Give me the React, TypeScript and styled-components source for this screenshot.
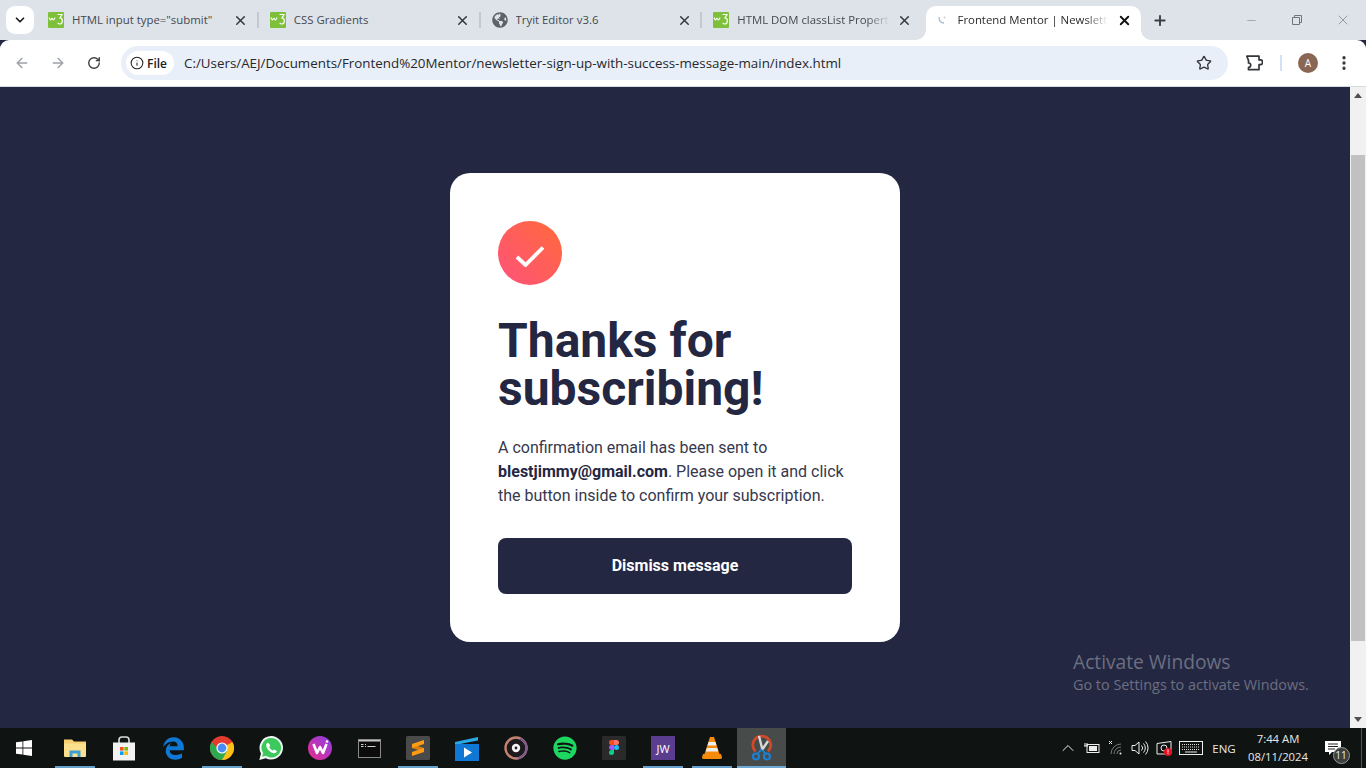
import React from "react";
import styled, { createGlobalStyle } from "styled-components";
import { FaGlobeAmericas, FaEdgeLegacy, FaSpotify } from "react-icons/fa";
import { ArrowLeft, ArrowRight, RotateCw, Info, Star, EllipsisVertical, ChevronDown, X, Plus, Minus, ChevronUp } from "lucide-react";

const Global = createGlobalStyle`
  html, body { margin: 0; padding: 0; height: 768px; overflow: hidden; background: #232742; }
  #root { height: 768px; }
  * { box-sizing: border-box; }
`;
const UI = `"Open Sans", "Noto Sans", "Liberation Sans", sans-serif`;

const Screen = styled.div`
  width: 1366px; height: 768px; display: flex; flex-direction: column; position: relative; overflow: hidden;
  font-family: ${UI};
`;
const TabStrip = styled.div`
  height: 40px; background: #dee3ea; display: flex; padding: 6px 0 0 6px; flex: none; position: relative; z-index: 1;
`;
const DropBtn = styled.div`
  width: 28px; height: 28px; background: #fff; border-radius: 9px; display: flex; align-items: center; justify-content: center;
  margin-right: 2px; color: #1f1f1f; flex: none;
`;
const Tab = styled.div<{ $sep?: boolean }>`
  width: 221.75px; height: 34px; display: flex; align-items: center; flex: none; position: relative;
  padding: 0 ${p => (p.$sep ? 11 : 13)}px 6px 12px; gap: 8px;
  ${p => p.$sep ? `&::after { content: ""; position: absolute; right: -1px; top: 6px; width: 2px; height: 16px; background: #c4c8cf; }` : ""}
`;
const ActiveTab = styled.div`
  width: 215px; height: 34px; display: flex; align-items: center; flex: none; position: relative;
  padding: 0 10px 6px 11px; gap: 11px; margin-left: 2.5px; background: #fff; border-radius: 10px 10px 0 0;
  &::before, &::after { content: ""; position: absolute; bottom: 0; width: 10px; height: 10px; }
  &::before { left: -10px; background: radial-gradient(circle at 0 0, transparent 9.5px, #fff 10px); }
  &::after { right: -10px; background: radial-gradient(circle at 100% 0, transparent 9.5px, #fff 10px); }
`;
const TabTitle = styled.span<{ $active?: boolean; $fade?: boolean }>`
  flex: 1; min-width: 0; font-size: 11.4px; line-height: 16px; white-space: nowrap; overflow: hidden;
  color: ${p => (p.$active ? "#2b2b2b" : "#45494e")};
  ${p => p.$fade ? "-webkit-mask-image: linear-gradient(to right, #000 85%, transparent 100%); mask-image: linear-gradient(to right, #000 85%, transparent 100%);" : ""}
`;
const TabClose = styled.span`
  width: 12px; height: 12px; display: flex; align-items: center; justify-content: center; flex: none; color: #33373b;
  svg { flex: none; }
`;
const NewTab = styled.div`
  width: 16px; margin: 6px 0 0 11px; color: #3a3d41; height: 16px; flex: none; display: flex; align-items: center; justify-content: center;
`;
const WinButtons = styled.div`
  margin-left: auto; display: flex; height: 28px; color: #70757a; flex: none; width: 138px;
`;
const WinBtn = styled.div`
  width: 46px; height: 28px; display: flex; align-items: center; justify-content: center;
`;
const Toolbar = styled.div`
  height: 46px; background: #fff; display: flex; align-items: center; flex: none; border-radius: 9px 9px 0 0;
  margin-bottom: 1px; position: relative; box-shadow: 0 1px 0 #d6d9dd;
`;
const NavBtn = styled.div<{ $w: number; $c: string }>`
  width: ${p => p.$w}px; height: 32px; display: flex; align-items: center; justify-content: center; color: ${p => p.$c}; flex: none;
`;
const NavGroup = styled.div`
  display: flex; padding-left: 4px; width: 121px; flex: none;
`;
const Omnibox = styled.div`
  width: 1107px; height: 34px; background: #e9eff8; border-radius: 17px; display: flex; align-items: center; padding: 0 16px 0 5px; flex: none;
`;
const Chip = styled.div`
  width: 48px; height: 24px; border-radius: 12px; background: #fff; display: flex; align-items: center; padding-left: 4px; gap: 3px; flex: none; color: #202124;
  font-size: 12px; font-weight: 600;
`;
const Url = styled.span`
  margin-left: 10px; font-size: 13.36px; color: #26282b; white-space: nowrap; flex: 1;
`;
const ToolRight = styled.div`
  display: flex; align-items: center; flex: none; padding-left: 14px;
`;
const ToolDivider = styled.div`
  width: 2px; height: 16px; background: #d3e2f6; margin: 0 16px 0 17px;
`;
const Avatar = styled.div`
  width: 20px; height: 20px; border-radius: 50%; background: #8a6655; color: #fff; font-size: 10px; display: flex; align-items: center; justify-content: center; flex: none;
`;
const Body = styled.div`
  flex: 1; min-height: 0; display: flex;
`;
const Page = styled.main`
  flex: 1; background: #232742; display: flex; align-items: center; justify-content: center; font-family: Roboto, sans-serif;
`;
const Card = styled.section`
  width: 450px; height: 469px; background: #fff; border-radius: 20px; padding: 48px;
  display: flex; flex-direction: column;
`;
const Check = styled.div`
  width: 64px; height: 64px; border-radius: 50%; background: linear-gradient(225deg, #ff6a3a 0%, #ff527b 100%);
  display: flex; align-items: center; justify-content: center; flex: none;
`;
const Title = styled.h1`
  margin: 32px 0 0; font-size: 48px; line-height: 48px; font-weight: 700; color: #242742;
`;
const Message = styled.p`
  margin: 23px 0 0; font-size: 16px; line-height: 24px; color: #36384d;
  b { font-weight: 700; color: #242742; }
`;
const Dismiss = styled.button`
  margin-top: 30px; height: 56px; background: #242742; color: #fff; border: 0; border-radius: 8px; padding: 0 0 2px;
  font: 700 16px Roboto, sans-serif; flex: none;
`;
const Scrollbar = styled.div`
  width: 16px; background: #f1f1f1; display: flex; flex-direction: column; align-items: center; flex: none;
`;
const ArrowBtn = styled.div`
  height: 17px; width: 16px; display: flex; align-items: center; justify-content: center; flex: none;
`;
const Track = styled.div`
  flex: 1; width: 100%; padding: 51px 1px 70px;
`;
const Thumb = styled.div`
  height: 100%; background: #c1c1c1;
`;
const Watermark = styled.div`
  position: absolute; left: 1073px; top: 649px; color: rgba(255,255,255,.34); pointer-events: none;
`;
const WmTitle = styled.div`
  font-size: 19.2px; line-height: 25px;
`;
const WmSub = styled.div`
  font-size: 14.4px; line-height: 21px;
`;
const Taskbar = styled.footer`
  height: 40px; background: #0f1413; display: flex; flex: none; color: #fff;
`;
const Start = styled.div`
  width: 50.5px; display: flex; align-items: center; justify-content: center; padding-right: 2.5px; flex: none;
`;
const TaskItem = styled.div<{ $run?: boolean; $active?: boolean }>`
  width: 49px; height: 40px; display: flex; align-items: center; justify-content: center; position: relative; flex: none;
  background: ${p => (p.$active ? "#474b49" : "transparent")};
  &::after {
    content: ""; position: absolute; bottom: 0; height: 2px; background: #76b9ed;
    left: ${p => (p.$active ? "0" : "4.5px")}; right: ${p => (p.$active ? "0" : "4.5px")};
    display: ${p => (p.$run || p.$active ? "block" : "none")};
    opacity: .85;
  }
`;
const JW = styled.div`
  width: 24px; height: 24px; background: #5b3d8f; color: #fff; font-size: 11px; display: flex; align-items: center; justify-content: center;
`;
const Tray = styled.div`
  margin-left: auto; display: flex; align-items: center; color: #eee; flex: none; padding-right: 4px; height: 40px;
`;
const TrayIcon = styled.div<{ $w: number }>`
  width: ${p => p.$w}px; display: flex; align-items: center; justify-content: center; flex: none;
`;
const Lang = styled.span`
  width: 36px; font-size: 11.5px; text-align: center; color: #e8e8e8; flex: none;
`;
const Clock = styled.div`
  width: 72px; text-align: center; font-size: 11.3px; line-height: 18px; color: #e8e8e8; flex: none;
`;
const Notif = styled.div`
  width: 48px; height: 40px; position: relative; display: flex; align-items: center; justify-content: center; flex: none;
  border-right: 1px solid #555; padding-right: 9px;
`;
const Count = styled.span`
  position: absolute; left: 18.5px; top: 19px; width: 17px; height: 17px; border-radius: 50%; background: #3c3f3f; border: 1px solid #999;
  font-size: 10px; line-height: 15px; text-align: center; color: #eee;
`;

const W3 = () => (
  <svg width="16" height="16" viewBox="0 0 16 16" style={{ flex: "none" }}>
    <rect width="16" height="16" rx="1" fill="#7fc03a" />
    <path d="M1 5.5c.6 1.6 1 2.500 1.500 2.500s.9-1.800 1.400-1.800.9 1.800 1.400 1.800 1.100-1 1.800-2.500" stroke="#fff" strokeWidth="1.1" fill="none" />
    <path d="M9.500 2.500h4.500l-2 3.500c1.800 0 2.300 1.300 2.300 2.700 0 1.900-1.100 3.300-2.500 3.300-.9 0-1.600-.4-2.100-1.100" stroke="#fff" strokeWidth="1.200" fill="none" />
  </svg>
);
const ChromeIcon = () => (
  <svg width="24" height="24" viewBox="0 0 24 24">
    <circle cx="12" cy="12" r="12" fill="#e33b2e" />
    <path d="M12 24A12 12 0 0 0 22.4 6L12 12 7 21z" fill="#fbc116" />
    <path d="M1.6 6A12 12 0 0 0 12 24l5-9-5-3H7z" fill="#2da94f" />
    <circle cx="12" cy="12" r="5.6" fill="#fff" />
    <circle cx="12" cy="12" r="4.4" fill="#4a8bf5" />
  </svg>
);
const Explorer = () => (
  <svg width="22" height="20" viewBox="0 0 22 20">
    <path d="M0 1.5h8l2 2h12V18H0z" fill="#f9d06f" />
    <path d="M0 5.5h22V18a1 1 0 0 1-1 1H1a1 1 0 0 1-1-1z" fill="#fce08d" />
    <path d="M5.500 19v-6.500h11V19h-3v-3.500h-5V19z" fill="#3f9ed4" />
  </svg>
);
const StoreIcon = () => (
  <svg width="24" height="25" viewBox="0 0 24 25">
    <path d="M7 7V4a3 3 0 0 1 3-3h4a3 3 0 0 1 3 3v3" fill="none" stroke="#ddd" strokeWidth="1.6" />
    <rect x="1" y="6.5" width="22" height="18" fill="#f2f2f2" />
    <rect x="8" y="11" width="3.6" height="3.6" fill="#f25022" />
    <rect x="12.4" y="11" width="3.6" height="3.6" fill="#7fba00" />
    <rect x="8" y="15.4" width="3.6" height="3.6" fill="#00a4ef" />
    <rect x="12.4" y="15.4" width="3.6" height="3.6" fill="#ffb900" />
  </svg>
);
const WhatsApp = () => (
  <svg width="24" height="24" viewBox="0 0 24 24">
    <path d="M12.200 0A11.800 11.800 0 0 0 2 17.600L.3 24l6.500-1.700A11.800 11.800 0 1 0 12.200 0z" fill="#f2f7f3" />
    <path d="M12.200 2.100a9.700 9.700 0 0 0-8.100 15l-1 3.700 3.800-1a9.700 9.700 0 1 0 5.300-17.700z" fill="#3bc95c" />
    <path d="M8.700 6.700c-.5 0-1.500.9-1.500 2.500 0 3.400 4.300 8 8.100 8 1.500 0 2.500-1.200 2.500-2 0-.5-2.200-1.700-2.700-1.700-.4 0-.8 1-1.300 1-1 0-3.500-2.400-3.500-3.400 0-.5.900-.8.900-1.300 0-.4-1-3.100-2.500-3.100z" fill="#fff" />
  </svg>
);
const Wps = () => (
  <svg width="24" height="24" viewBox="0 0 24 24">
    <defs><linearGradient id="wps" x1="0" y1="1" x2="1" y2="0"><stop offset="0" stopColor="#ea2c8c" /><stop offset="1" stopColor="#8a3fe4" /></linearGradient></defs>
    <circle cx="12" cy="12" r="12" fill="url(#wps)" />
    <path d="M5.500 8l3.500 9 3-6 3 6 3.500-9" stroke="#fff" strokeWidth="2.6" fill="none" strokeLinejoin="round" />
    <circle cx="19" cy="5.5" r="1.3" fill="#fff" />
  </svg>
);
const Term = () => (
  <svg width="23" height="19" viewBox="0 0 23 19">
    <rect x=".5" y=".5" width="22" height="18" fill="#0c0c0c" stroke="#8a8a8a" />
    <rect x="1" y="1" width="21" height="1.5" fill="#c8c8c8" />
    <path d="M3 5.500h2.500M3 7.500h2.500M7 5.500h1M7 7.500h1M9.500 7.500h8" stroke="#ccc" strokeWidth="1" fill="none" />
  </svg>
);
const Sublime = () => (
  <svg width="24" height="24" viewBox="0 0 24 24">
    <rect width="24" height="24" rx="1.5" fill="#4a4a4a" />
    <path d="M6 8l12 4v4L6 12z" fill="#d97f0e" />
    <path d="M6 8l12-4v4L6 12zM6 16l12-4v4L6 20z" fill="#ff9c13" />
  </svg>
);
const Movies = () => (
  <svg width="24" height="25" viewBox="0 0 24 25">
    <path d="M0 6l23-5v3.500L0 9z" fill="#29a8e8" />
    <path d="M0 8h24v17H0z" fill="#0f78d4" />
    <path d="M9 11.500l8 5-8 5z" fill="#fff" />
  </svg>
);
const Groove = () => (
  <svg width="24" height="24" viewBox="0 0 24 24">
    <circle cx="12" cy="12" r="10.5" fill="#1c1a1c" stroke="#c48370" strokeWidth="2.4" />
    <path d="M16 2.300A10.500 10.500 0 0 1 14 22.300" fill="none" stroke="#7b5a90" strokeWidth="2.4" />
    <circle cx="12" cy="12" r="4.2" fill="#f4f4f4" />
    <circle cx="12" cy="12" r="1.4" fill="#222" />
  </svg>
);
const Figma = () => (
  <svg width="24" height="24" viewBox="0 0 24 24">
    <rect width="24" height="24" rx="1.5" fill="#2a2a2a" />
    <path d="M7 4h5v5H9.500A2.500 2.500 0 0 1 7 6.500 2.500 2.500 0 0 1 9.500 4z" fill="#f24e1e" />
    <path d="M12 4h2.500a2.500 2.500 0 0 1 0 5H12z" fill="#ff7262" />
    <path d="M12 9H9.500a2.500 2.500 0 0 0 0 5H12z" fill="#a259ff" />
    <circle cx="14.5" cy="11.5" r="2.5" fill="#1abcfe" />
    <path d="M9.500 14H12v2.500a2.500 2.500 0 1 1-2.500-2.500z" fill="#0acf83" />
  </svg>
);
const Vlc = () => (
  <svg width="20" height="24" viewBox="0 0 20 24">
    <path d="M8 1h4l5.500 17h-15z" fill="#f58a0b" />
    <path d="M6.500 6h7l1 3.500h-9zM4.800 12h10.400l1 3.400H3.800z" fill="#eee" />
    <path d="M1 18h18l1 3.500q0 1.500-2 1.500H2q-2 0-2-1.500z" fill="#f58a0b" />
  </svg>
);
const Snip = () => (
  <svg width="24" height="26" viewBox="0 0 24 26">
    <path d="M6.500 16.500A9 9 0 1 1 19 16.500" fill="none" stroke="#d2492a" strokeWidth="2.8" />
    <path d="M10 1l3.500 14M19 6l-6 9" stroke="#d8d8d8" strokeWidth="2.4" />
    <circle cx="7" cy="21.5" r="3" fill="none" stroke="#1d7fd1" strokeWidth="2.2" />
    <circle cx="18" cy="21.5" r="3" fill="none" stroke="#1d7fd1" strokeWidth="2.2" />
    <path d="M8.500 19l4-5M16.500 19l-3-4" stroke="#1d7fd1" strokeWidth="2" />
  </svg>
);
const Puzzle = () => (
  <svg width="18" height="18" viewBox="0 0 18 18" style={{ marginLeft: 3, flex: "none" }}>
    <path d="M1.800 2.500h12.200v3.700h1.200a2 2 0 0 1 0 4.800H14v5H3.500v-2.300A2.200 2.200 0 0 0 3.500 9.300V6.700z" transform="translate(0 -.3)" fill="none" stroke="#33373b" strokeWidth="1.7" strokeLinejoin="round" />
  </svg>
);
const KeyboardIcon = () => (
  <svg width="24" height="14" viewBox="0 0 24 14">
    <rect x=".5" y=".5" width="23" height="13" fill="none" stroke="#eee" />
    <path d="M3 3.500h18M3 6h18M3 8.500h18" stroke="#ddd" strokeDasharray="1 1" />
    <path d="M6 11h12" stroke="#eee" />
  </svg>
);
const VolumeIcon = () => (
  <svg width="18" height="16" viewBox="0 0 18 16">
    <path d="M1 5.500h3L8 2v12l-4-3.500H1z" fill="none" stroke="#eee" />
    <path d="M10.500 5.500a3.500 3.500 0 0 1 0 5M12.500 3.500a6.500 6.500 0 0 1 0 9M14.500 1.500a9.500 9.500 0 0 1 0 13" fill="none" stroke="#eee" />
  </svg>
);
const tabs = [
  { title: 'HTML input type="submit"', icon: <W3 /> },
  { title: "CSS Gradients", icon: <W3 /> },
  { title: "Tryit Editor v3.6", icon: <FaGlobeAmericas size={16} color="#5f6368" style={{ flex: "none" }} /> },
];

export default function App() {
  return (
    <Screen>
      <Global />
      <TabStrip>
        <DropBtn><ChevronDown size={14} strokeWidth={3} /></DropBtn>
        {tabs.map(t => (
          <Tab key={t.title} $sep>
            {t.icon}
            <TabTitle>{t.title}</TabTitle>
            <TabClose><X size={15} strokeWidth={2.4} /></TabClose>
          </Tab>
        ))}
        <Tab>
          <W3 />
          <TabTitle $fade>HTML DOM classList Property</TabTitle>
          <TabClose><X size={15} strokeWidth={2.4} /></TabClose>
        </Tab>
        <ActiveTab>
          <svg width="10" height="10" viewBox="0 0 10 10" style={{ flex: "none" }}>
            <path d="M2 2c0 4 1.500 6 5 6" stroke="#a6bed0" strokeWidth="1.3" fill="none" />
            <circle cx="7.5" cy="2.5" r="1" fill="#c0d0dc" />
          </svg>
          <TabTitle $active $fade>Frontend Mentor | Newsletter sign-up</TabTitle>
          <TabClose><X size={15} strokeWidth={3} color="#111" /></TabClose>
        </ActiveTab>
        <NewTab><Plus size={17} strokeWidth={2.8} /></NewTab>
        <WinButtons>
          <WinBtn><Minus size={13} strokeWidth={1} /></WinBtn>
          <WinBtn>
            <svg width="10" height="10" viewBox="0 0 10 10"><path d="M.5 2.500h7v7h-7zM2.500 2.500v-2h7v7h-2" fill="none" stroke="#70757a" /></svg>
          </WinBtn>
          <WinBtn><X size={16} strokeWidth={1} /></WinBtn>
        </WinButtons>
      </TabStrip>
      <Toolbar>
        <NavGroup>
          <NavBtn $w={36} $c="#9aa0a6"><ArrowLeft size={16} strokeWidth={2} /></NavBtn>
          <NavBtn $w={36} $c="#9aa0a6"><ArrowRight size={16} strokeWidth={2} /></NavBtn>
          <NavBtn $w={36} $c="#3c4043"><RotateCw size={14} strokeWidth={2.4} /></NavBtn>
        </NavGroup>
        <Omnibox>
          <Chip><Info size={14} strokeWidth={1.8} />File</Chip>
          <Url>C:/Users/AEJ/Documents/Frontend%20Mentor/newsletter-sign-up-with-success-message-main/index.html</Url>
          <Star size={16} strokeWidth={2} color="#33373b" />
        </Omnibox>
        <ToolRight>
          <Puzzle />
          <ToolDivider />
          <Avatar>A</Avatar>
          <EllipsisVertical size={18} strokeWidth={2.4} color="#33373b" style={{ marginLeft: 17 }} />
        </ToolRight>
      </Toolbar>
      <Body>
        <Page>
          <Card>
            <Check>
              <svg width="32" height="28" viewBox="0 0 32 28"><path d="M3 18l8.500 8L29 8.500" stroke="#fff" strokeWidth="3.8" fill="none" /></svg>
            </Check>
            <Title>Thanks for subscribing!</Title>
            <Message>A confirmation email has been sent to <b>blestjimmy@gmail.com</b>. Please open it and click the button inside to confirm your subscription.</Message>
            <Dismiss>Dismiss message</Dismiss>
          </Card>
        </Page>
        <Scrollbar>
          <ArrowBtn><svg width="8" height="5" viewBox="0 0 8 5"><path d="M0 5l4-5 4 5z" fill="#505050" /></svg></ArrowBtn>
          <Track><Thumb /></Track>
          <ArrowBtn><svg width="8" height="5" viewBox="0 0 8 5"><path d="M0 0l4 5 4-5z" fill="#505050" /></svg></ArrowBtn>
        </Scrollbar>
      </Body>
      <Watermark>
        <WmTitle>Activate Windows</WmTitle>
        <WmSub>Go to Settings to activate Windows.</WmSub>
      </Watermark>
      <Taskbar>
        <Start>
          <svg width="16" height="16" viewBox="0 0 16 16"><path d="M0 2.300l6.500-.9v6.200H0zM7.300 1.300L16 0v7.600H7.300zM0 8.400h6.500v6.200L0 13.700zM7.300 8.400H16V16l-8.700-1.300z" fill="#fff" /></svg>
        </Start>
        <TaskItem $run><Explorer /></TaskItem>
        <TaskItem><StoreIcon /></TaskItem>
        <TaskItem><FaEdgeLegacy size={23} color="#0f78d4" /></TaskItem>
        <TaskItem $run><ChromeIcon /></TaskItem>
        <TaskItem><WhatsApp /></TaskItem>
        <TaskItem><Wps /></TaskItem>
        <TaskItem><Term /></TaskItem>
        <TaskItem $run><Sublime /></TaskItem>
        <TaskItem><Movies /></TaskItem>
        <TaskItem><Groove /></TaskItem>
        <TaskItem><FaSpotify size={24} color="#1ed760" /></TaskItem>
        <TaskItem><Figma /></TaskItem>
        <TaskItem $run><JW>JW</JW></TaskItem>
        <TaskItem $run><Vlc /></TaskItem>
        <TaskItem $active><Snip /></TaskItem>
        <Tray>
          <TrayIcon $w={24}><ChevronUp size={20} strokeWidth={1.2} /></TrayIcon>
          <TrayIcon $w={24}>
            <svg width="16" height="12" viewBox="0 0 16 12"><rect x="3" y="2.500" width="12" height="8" fill="none" stroke="#eee" /><rect x="5" y="4" width="8" height="5" fill="#eee" /><path d="M1 1v3M3 1v3M0 4h4" stroke="#eee" /></svg>
          </TrayIcon>
          <TrayIcon $w={24}>
            <svg width="16" height="16" viewBox="0 0 16 16"><path d="M3 14A10 10 0 0 1 13 4M6 14a7 7 0 0 1 7-7M9 14a4 4 0 0 1 4-4" stroke="#777" fill="none" /><circle cx="12.500" cy="13.500" r="1" fill="#eee" /><path d="M1 1l3 3M4 1L1 4" stroke="#eee" /></svg>
          </TrayIcon>
          <TrayIcon $w={24}><VolumeIcon /></TrayIcon>
          <TrayIcon $w={24}>
            <svg width="17" height="16" viewBox="0 0 17 16"><path d="M1 3.500L15 1.500v12.500H1z" fill="none" stroke="#eee" /><circle cx="8" cy="8" r="3" fill="none" stroke="#eee" /><circle cx="12" cy="12" r="4" fill="#e81123" /><rect x="11.500" y="9.500" width="1" height="3" fill="#fff" /><rect x="11.500" y="13" width="1" height="1" fill="#fff" /></svg>
          </TrayIcon>
          <TrayIcon $w={30}><KeyboardIcon /></TrayIcon>
          <Lang>ENG</Lang>
          <Clock>7:44 AM<br />08/11/2024</Clock>
          <Notif>
            <svg width="16" height="15" viewBox="0 0 16 15"><path d="M0 0h16v11H7l-3 3v-3H0z" fill="#fff" /><path d="M3 3h10M3 5.500h10M3 8h7" stroke="#222" /></svg>
            <Count>11</Count>
          </Notif>
        </Tray>
      </Taskbar>
    </Screen>
  );
}
